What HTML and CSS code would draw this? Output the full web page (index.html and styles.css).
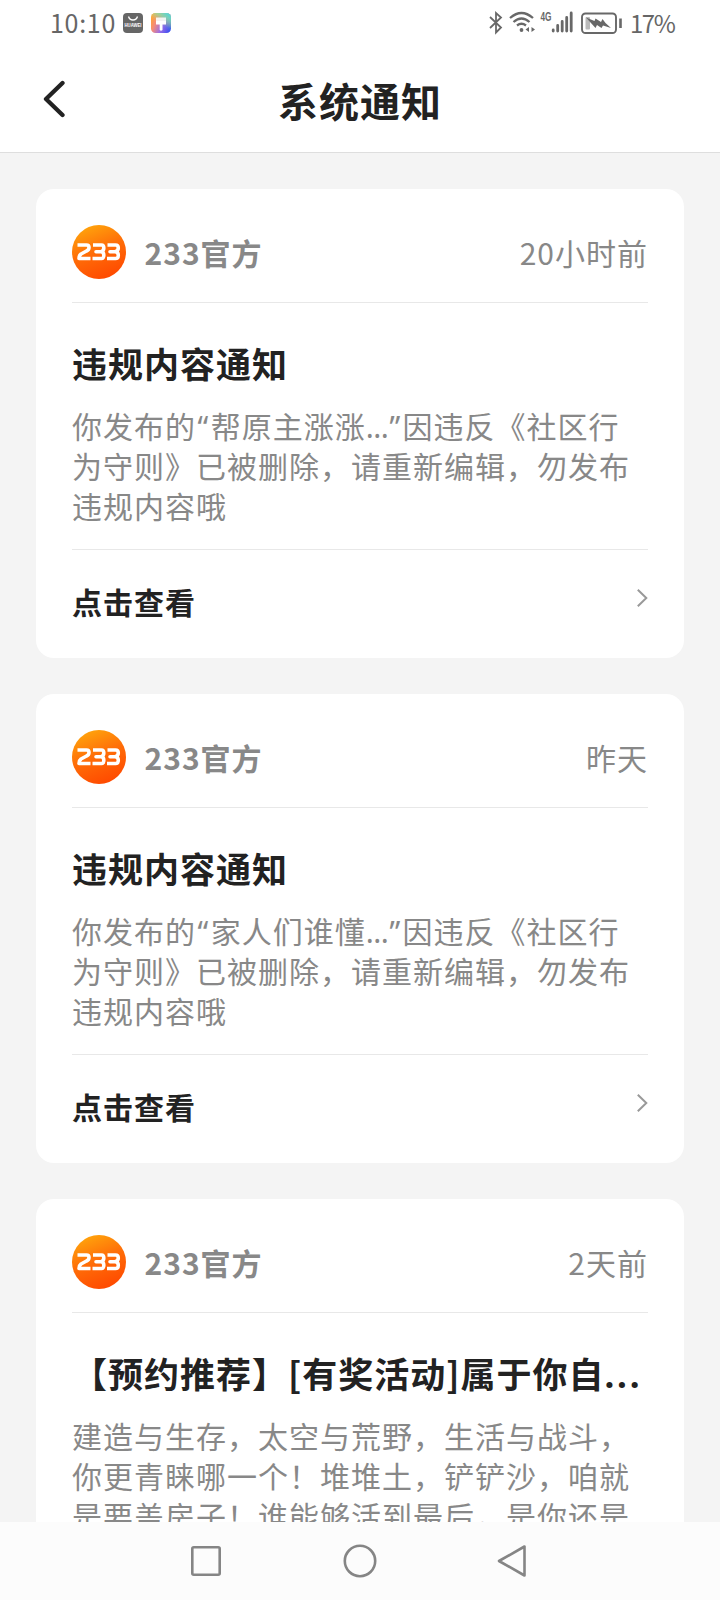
FILE: index.html
```html
<!DOCTYPE html>
<html lang="zh-CN">
<head>
<meta charset="utf-8">
<title>系统通知</title>
<link rel="stylesheet" href="styles.css">
</head>
<body>
<svg width="0" height="0" class="defs">
  <defs>
    <linearGradient id="orange" x1="0.2" y1="0" x2="0.6" y2="1">
      <stop offset="0" stop-color="#ffa80c"/><stop offset="0.5" stop-color="#ff6d08"/><stop offset="1" stop-color="#ff4a00"/>
    </linearGradient>
    <linearGradient id="rainbow" x1="0" y1="0.3" x2="1" y2="0.7">
      <stop offset="0" stop-color="#ffa03a"/><stop offset="0.25" stop-color="#f58b78"/><stop offset="0.6" stop-color="#9a6ee8"/><stop offset="1" stop-color="#3f4df0"/>
    </linearGradient>
    <linearGradient id="sky" x1="0.3" y1="0" x2="0" y2="0.7">
      <stop offset="0" stop-color="#e8d860" stop-opacity=".8"/><stop offset="0.6" stop-color="#ffb040" stop-opacity="0"/>
    </linearGradient>
    <linearGradient id="aqua" x1="1" y1="0" x2="0.5" y2="0.6">
      <stop offset="0" stop-color="#3fd8e8"/><stop offset="1" stop-color="#4fdcc8" stop-opacity="0"/>
    </linearGradient>
    <symbol id="logo" viewBox="0 0 54 54">
      <circle cx="27" cy="27" r="27" fill="url(#orange)"/>
      <g fill="none" stroke="#fff" stroke-width="3.600" stroke-linejoin="round">
        <path d="M5.500 20H14.500Q17 20 17 22.500T14.500 26L9 29Q7 30.500 7 33.500H18.500"/>
        <path d="M21 20H29.500Q31.800 20 31.800 23T29 26.700H24H29Q31.800 26.700 31.800 30.300T29 33.500H20.500"/>
        <path d="M35.500 20H43.500Q46.300 20 46.300 23T43 26.700H38H43Q46.300 26.700 46.300 30.300T43 33.500H35"/>
      </g>
    </symbol>
    <symbol id="chevron" viewBox="0 0 12 20">
      <path d="M1.800 1.800L10.300 10L1.800 18.200" fill="none" stroke="#999" stroke-width="2"/>
    </symbol>
  </defs>
</svg>
<div class="screen">
  <div class="status">
    <span class="clock">10:10</span>
    <svg class="app-a" width="20" height="20" viewBox="0 0 20 20">
      <rect width="20" height="20" rx="4" fill="#666"/>
      <path d="M5.500 3.500Q6.500 7 10 7T14.500 3.500" fill="none" stroke="#fff" stroke-width="1.300"/>
      <text x="10" y="14" class="brand" textLength="17" lengthAdjust="spacingAndGlyphs">HUAWEI</text>
    </svg>
    <svg class="app-b" width="20" height="20" viewBox="0 0 20 20">
      <rect width="20" height="20" rx="4.500" fill="url(#rainbow)"/>
      <rect width="20" height="20" rx="4.500" fill="url(#sky)"/>
      <rect width="20" height="20" rx="4.500" fill="url(#aqua)"/>
      <path d="M5 4.500H15V8H5Z" fill="#fff" opacity=".85"/>
      <path d="M5 8H15V11.500H11.500V17Q10 18.500 8.700 17V11.500H5Z" fill="#fff"/>
    </svg>
    <span class="spacer"></span>
    <svg class="indicators" width="146" height="32" viewBox="0 0 146 32">
      <g fill="none" stroke="#686868" stroke-width="1.800">
        <path d="M2 9L13 19.500L8 24.500V5L13 9.500L2 20"/>
        <path d="M22 10Q33.500 0 45 10M25.500 14Q33.500 7 41.500 14M29 17.500Q33.500 14 38 17.500" stroke-width="2.300"/>
      </g>
      <circle cx="33.500" cy="22" r="1.900" fill="#686868"/>
      <path d="M41 19V24L37.500 21.500ZM43.500 19V24L47 21.500Z" fill="#686868"/>
      <text x="52.500" y="12.800" class="net" textLength="11" lengthAdjust="spacingAndGlyphs">4G</text>
      <path d="M65.200 22V23M69.700 17.500V23M74.200 13.500V23M78.700 9.500V23M83.200 5V23" stroke="#686868" stroke-width="2.800" stroke-linecap="round"/>
      <rect x="94" y="5.500" width="34" height="19.500" rx="3.500" fill="none" stroke="#686868" stroke-width="1.900"/>
      <rect x="97.500" y="9" width="4.500" height="12.500" rx="1" fill="#bbb"/>
      <path d="M98 9.500L106.500 13L107.500 10.500L113 14L114.500 11L117.500 15L123 20L115 17.500L113.500 20L109 17L107.500 20Z" fill="#686868"/>
      <path d="M132.500 10.500V20" stroke="#686868" stroke-width="2.600"/>
    </svg>
    <span class="percent">17%</span>
  </div>

  <header class="header">
    <svg class="back" width="24" height="38" viewBox="0 0 24 38">
      <path d="M20.500 3L4 19L20.500 35" fill="none" stroke="#222" stroke-width="4.300" stroke-linecap="round" stroke-linejoin="round"/>
    </svg>
    <h1>系统通知</h1>
  </header>

  <main class="feed">
    <article class="card">
      <div class="source"><svg class="avatar"><use href="#logo"/></svg><b>233官方</b><time>20小时前</time></div>
      <h2>违规内容通知</h2>
      <p>你发布的<span class="open">“</span>帮原主涨涨<span class="ell">...</span><span class="close">”</span>因违反《社区行<br>为守则》已被删除，请重新编辑，勿发布<br>违规内容哦</p>
      <div class="more"><b>点击查看</b><svg class="chevron"><use href="#chevron"/></svg></div>
    </article>
    <article class="card">
      <div class="source"><svg class="avatar"><use href="#logo"/></svg><b>233官方</b><time>昨天</time></div>
      <h2>违规内容通知</h2>
      <p>你发布的<span class="open">“</span>家人们谁懂<span class="ell">...</span><span class="close">”</span>因违反《社区行<br>为守则》已被删除，请重新编辑，勿发布<br>违规内容哦</p>
      <div class="more"><b>点击查看</b><svg class="chevron"><use href="#chevron"/></svg></div>
    </article>
    <article class="card">
      <div class="source"><svg class="avatar"><use href="#logo"/></svg><b>233官方</b><time>2天前</time></div>
      <h2>【预约推荐】[有奖活动]属于你自<span class="dots">...</span></h2>
      <p>建造与生存，太空与荒野，生活与战斗，<br>你更青睐哪一个！堆堆土，铲铲沙，咱就<br>是要盖房子！谁能够活到最后，是你还是</p>
    </article>
  </main>

  <nav class="nav">
    <svg width="720" height="78" viewBox="0 0 720 78" fill="none" stroke="#858585" stroke-width="2.600" stroke-linejoin="round">
      <rect x="192.300" y="25.300" width="27.400" height="27.400" rx="1.500"/>
      <circle cx="360" cy="39" r="15.200"/>
      <path d="M499 39L524.500 24.500V53.500Z"/>
    </svg>
  </nav>
</div>
</body>
</html>
```

FILE: styles.css
```css
* { box-sizing: border-box; }
body {
  margin: 0;
  font-family: "Noto Sans CJK SC", sans-serif;
  text-spacing-trim: space-all;
  background: #f4f4f4;
}
.defs { position: absolute; }
.screen {
  width: 720px;
  height: 1600px;
  display: flex;
  flex-direction: column;
  overflow: hidden;
}
.status {
  flex: none;
  height: 48px;
  padding: 0 44px 0 50px;
  display: flex;
  align-items: center;
  background: #fff;
  color: #666;
  font-size: 25px;
  line-height: 46px;
  white-space: nowrap;
}
.clock { width: 73px; letter-spacing: .7px; margin-top: -4px; }
.app-a { margin-right: 8px; margin-top: -2px; }
.app-b { margin-top: -2px; }
.spacer { flex: 1; }
.indicators { margin-right: -4px; }
.percent { width: 46px; font-size: 24px; letter-spacing: -1.500px; margin-top: -2px; }
.brand { font: bold 5px "Liberation Sans", sans-serif; fill: #fff; text-anchor: middle; }
.net { font: bold 12px "Liberation Sans", sans-serif; fill: #686868; }
.header {
  flex: none;
  height: 105px;
  padding: 0 42px;
  display: grid;
  grid-template-columns: 24px 1fr 24px;
  align-items: center;
  background: #fff;
  border-bottom: 1px solid #dedede;
}
.back { margin-top: -2px; }
h1 {
  margin: 0 0 1px;
  color: #222;
  font-size: 40px;
  line-height: 60px;
  letter-spacing: 1px;
  text-align: center;
}
.feed {
  flex: 1;
  min-height: 0;
  overflow: hidden;
  padding: 36px 36px 0;
  display: flex;
  flex-direction: column;
  gap: 36px;
}
.card {
  flex: none;
  height: 469px;
  padding: 0 36px;
  border-radius: 18px;
  background: #fff;
}
.source {
  height: 114px;
  padding-top: 12px;
  display: flex;
  align-items: center;
  border-bottom: 1px solid #e8e8e8;
  color: #888;
  font-size: 30px;
  line-height: 44px;
  letter-spacing: 1px;
}
.avatar { width: 54px; height: 54px; margin-right: 18.500px; }
.source b { flex: 1; }
h2 {
  margin: 33px 0 0;
  height: 54px;
  color: #222;
  font-size: 35px;
  line-height: 54px;
  letter-spacing: 1px;
  white-space: nowrap;
}
p {
  margin: 15px 0 0;
  height: 145px;
  border-bottom: 1px solid #e8e8e8;
  color: #888;
  font-size: 30px;
  line-height: 40px;
  letter-spacing: 1px;
  white-space: nowrap;
}
.open, .close, .ell { font-family: "Noto Sans", sans-serif; line-height: 1; }
.open { padding-left: 1.500px; letter-spacing: 2.500px; }
.ell { letter-spacing: -.5px; }
.close { padding-left: 1px; letter-spacing: 2.200px; }
.dots { font-family: "Noto Sans", sans-serif; letter-spacing: 2.800px; line-height: 1; }
.more {
  height: 108px;
  display: flex;
  align-items: center;
  justify-content: space-between;
  color: #222;
  font-size: 30px;
  letter-spacing: 1px;
}
.more b { margin-top: -6px; }
.chevron { width: 12px; height: 20px; margin-top: -12px; }
.nav { flex: none; height: 78px; background: #fcfcfc; }
.nav svg { display: block; }
```
